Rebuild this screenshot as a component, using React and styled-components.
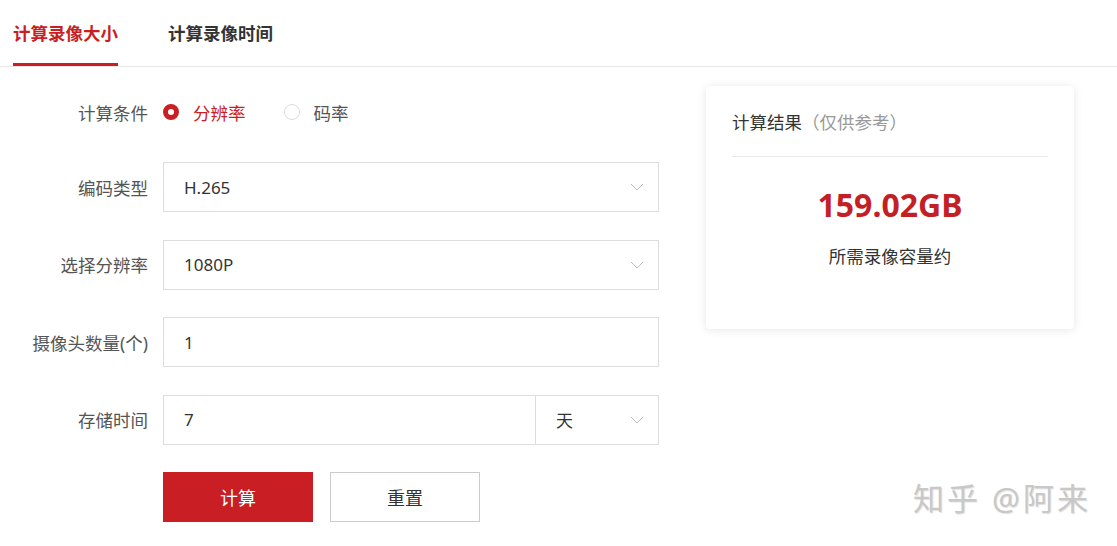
import React, { useState } from 'react'
import styled, { createGlobalStyle } from 'styled-components'

const RED = '#c81e24'

const GlobalStyle = createGlobalStyle`
    body {
        margin: 0;
        background: #fff;
        font-family: "Noto Sans", "Noto Sans CJK SC", sans-serif;
        color: #333;
    }
`

const Page = styled.div`
    position: relative;
    width: 1117px;
    height: 546px;
    overflow: hidden;
`

const TabBar = styled.div`
    display: flex;
    gap: 50px;
    height: 66px;
    padding-left: 13px;
    border-bottom: 1px solid #e6e6e6;
`

const Tab = styled.div`
    display: flex;
    align-items: center;
    height: 100%;
    box-sizing: border-box;
    padding-top: 2px;
    font-size: 17.5px;
    font-weight: 700;
    color: ${p => (p.active ? RED : '#333')};
    border-bottom: 3px solid ${p => (p.active ? RED : 'transparent')};
    margin-bottom: -1px;
`

const Body = styled.div`
    display: flex;
    align-items: flex-start;
    gap: 47px;
`

const Form = styled.div`
    display: flex;
    flex-direction: column;
    padding-top: 20px;
`

const Row = styled.div`
    display: flex;
    align-items: center;
    height: 50px;
    margin-top: ${p => p.gap || 0}px;
`

const Label = styled.div`
    width: 163px;
    padding-right: 15px;
    box-sizing: border-box;
    text-align: right;
    white-space: nowrap;
    font-size: 17.5px;
    color: #555;
`

const Field = styled.div`
    display: flex;
    align-items: center;
    justify-content: space-between;
    box-sizing: border-box;
    width: ${p => p.w}px;
    height: 50px;
    padding: 0 14px 0 20px;
    border: 1px solid #ddd;
    margin-left: ${p => (p.joined ? '-1px' : '0')};
    font-size: 17px;
    color: #333;
`

const Radios = styled.div`
    display: flex;
    align-items: center;
    gap: 38px;
`

const RadioItem = styled.label`
    display: flex;
    align-items: center;
    gap: 14px;
    font-size: 17.5px;
    color: ${p => (p.checked ? RED : '#555')};
    cursor: pointer;
`

const RadioDot = styled.span`
    width: 16px;
    height: 16px;
    box-sizing: border-box;
    border-radius: 50%;
    background: #fff;
    border: ${p => (p.checked ? `5px solid ${RED}` : '1px solid #ddd')};
`

const Buttons = styled.div`
    display: flex;
    gap: 17px;
    padding-left: 163px;
    margin-top: 27.5px;
`

const Button = styled.button`
    width: 150px;
    height: 50px;
    box-sizing: border-box;
    font-family: inherit;
    font-size: 18px;
    border: 1px solid ${p => (p.primary ? RED : '#ccc')};
    background: ${p => (p.primary ? RED : '#fff')};
    color: ${p => (p.primary ? '#fff' : '#333')};
    cursor: pointer;
`

const Card = styled.div`
    width: 368px;
    height: 243px;
    margin-top: 19px;
    box-sizing: border-box;
    padding: 0 26px;
    background: #fff;
    border-radius: 4px;
    box-shadow: 0 1px 10px rgba(0, 0, 0, 0.1);
    display: flex;
    flex-direction: column;
`

const CardTitle = styled.div`
    height: 70px;
    display: flex;
    align-items: center;
    border-bottom: 1px solid #eaeaea;
    font-size: 17.5px;
    color: #333;
    span {
        color: #999;
    }
`

const Amount = styled.div`
    margin-top: 26px;
    text-align: center;
    font-size: 32px;
    font-weight: 700;
    color: #c41f26;
    line-height: 44px;
`

const Caption = styled.div`
    margin-top: 16px;
    text-align: center;
    font-size: 17.5px;
    color: #333;
`

const Watermark = styled.div`
    position: absolute;
    left: 913px;
    top: 474px;
    font-size: 31px;
    letter-spacing: 3px;
    color: #c8c8c8;
    text-shadow: 1px 1px 1px rgba(0, 0, 0, 0.12);
    white-space: nowrap;
`

const Chevron = () => (
    <svg width="14" height="8" viewBox="0 0 14 8" fill="none">
        <polyline points="1,1 7,7 13,1" stroke="#bbb" strokeWidth="1" />
    </svg>
)

function App() {
    const [mode, setMode] = useState('res')

    return (
        <Page>
            <GlobalStyle />
            <TabBar>
                <Tab active>计算录像大小</Tab>
                <Tab>计算录像时间</Tab>
            </TabBar>
            <Body>
                <Form>
                    <Row>
                        <Label>计算条件</Label>
                        <Radios>
                            <RadioItem checked={mode === 'res'} onClick={() => setMode('res')}>
                                <RadioDot checked={mode === 'res'} />
                                分辨率
                            </RadioItem>
                            <RadioItem checked={mode === 'rate'} onClick={() => setMode('rate')}>
                                <RadioDot checked={mode === 'rate'} />
                                码率
                            </RadioItem>
                        </Radios>
                    </Row>
                    <Row gap={25}>
                        <Label>编码类型</Label>
                        <Field w={496}>H.265<Chevron /></Field>
                    </Row>
                    <Row gap={27.5}>
                        <Label>选择分辨率</Label>
                        <Field w={496}>1080P<Chevron /></Field>
                    </Row>
                    <Row gap={27.5}>
                        <Label>摄像头数量(个)</Label>
                        <Field w={496}>1</Field>
                    </Row>
                    <Row gap={27.5}>
                        <Label>存储时间</Label>
                        <Field w={373}>7</Field>
                        <Field w={124} joined>天<Chevron /></Field>
                    </Row>
                    <Buttons>
                        <Button primary>计算</Button>
                        <Button>重置</Button>
                    </Buttons>
                </Form>
                <Card>
                    <CardTitle>计算结果<span>（仅供参考）</span></CardTitle>
                    <Amount>159.02GB</Amount>
                    <Caption>所需录像容量约</Caption>
                </Card>
            </Body>
            <Watermark>知乎 @阿来</Watermark>
        </Page>
    )
}

export default App
